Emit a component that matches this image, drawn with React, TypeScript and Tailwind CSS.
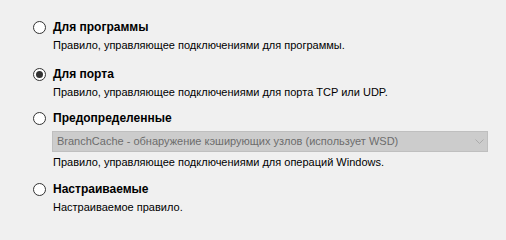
import React from "react";

function Radio({ checked }: { checked?: boolean }) {
  return (
    <svg width="13" height="13" viewBox="0 0 13 13" className="shrink-0">
      <circle cx="6.5" cy="6.5" r="6" fill="#ffffff" stroke="#333333" strokeWidth="1" />
      {checked && <circle cx="6.5" cy="6.5" r="3.5" fill="#333333" />}
    </svg>
  );
}

function Option({
  label,
  desc,
  checked,
  className,
  children,
}: {
  label: string;
  desc: string;
  checked?: boolean;
  className?: string;
  children?: React.ReactNode;
}) {
  return (
    <div className={"flex flex-col " + (className ?? "")}>
      <div className="flex items-center h-[20px] gap-[7px]">
        <Radio checked={checked} />
        <span className="font-bold text-[12px] leading-[20px] text-black">{label}</span>
      </div>
      <div className="pl-[20px] flex flex-col">
        {children}
        <div className="text-[11px] leading-[16px] text-black">{desc}</div>
      </div>
    </div>
  );
}

export default function App() {
  return (
    <div
      className="w-[506px] h-[240px] bg-[#f0f0f0] pt-[17px] pl-[33px] flex flex-col overflow-hidden"
      style={{ fontFamily: '"Liberation Sans", Arial, sans-serif' }}
    >
      <Option
        label="Для программы"
        desc="Правило, управляющее подключениями для программы."
      />
      <Option
        className="mt-[11px]"
        label="Для порта"
        checked
        desc="Правило, управляющее подключениями для порта TCP или UDP."
      />
      <Option
        className="mt-[8px]"
        label="Предопределенные"
        desc="Правило, управляющее подключениями для операций Windows."
      >
        <div className="mt-[3px] mb-[2px] ml-[-1px] w-[436px] h-[21px] bg-[#cccccc] border border-[#bfbfbf] flex items-center justify-between pl-[4px] pr-[3px]">
          <span className="text-[11px] text-[#6d6d6d] leading-[19px]">
            BranchCache - обнаружение кэширующих узлов (использует WSD)
          </span>
          <svg width="9" height="5" viewBox="0 0 9 5">
            <path d="M0.5 0.5 L4.5 4.5 L8.5 0.5" fill="none" stroke="#ababab" strokeWidth="1" />
          </svg>
        </div>
      </Option>
      <Option className="mt-[9px]" label="Настраиваемые" desc="Настраиваемое правило." />
    </div>
  );
}
